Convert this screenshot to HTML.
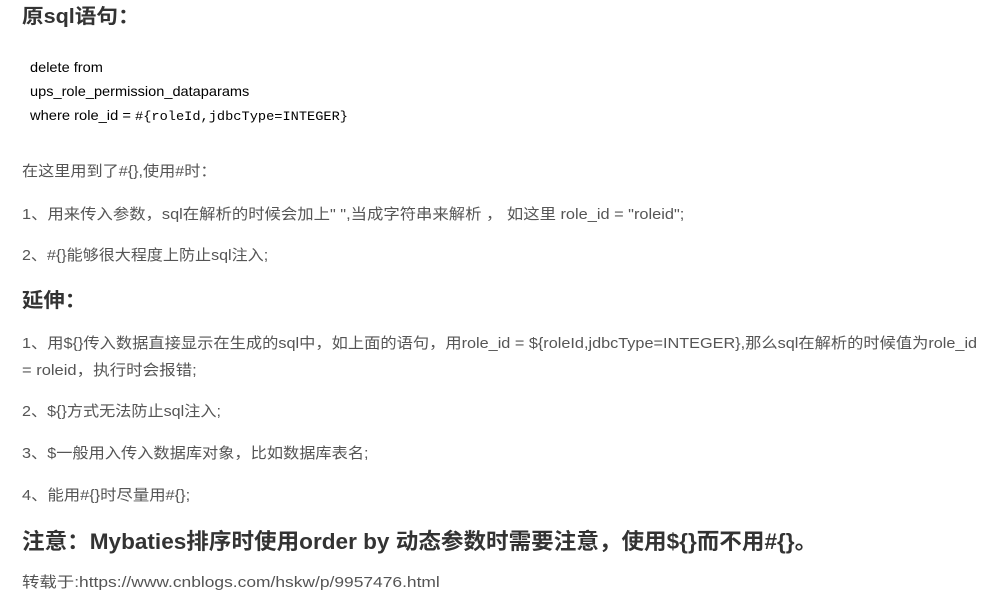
<!DOCTYPE html>
<html><head><meta charset="utf-8"><style>
body{margin:0;width:994px;height:609px;background:#fff;position:relative;overflow:hidden;font-family:"Liberation Sans","Noto Sans CJK SC",sans-serif;color:#555;font-size:15px}
div{position:absolute;left:22px;white-space:nowrap;line-height:20px;transform-origin:0 50%}
.h{font-weight:bold;color:#333;font-size:20px;line-height:26px}
.c{color:#000;font-size:14px;left:30px}
.m{font-family:"Liberation Mono","DejaVu Sans Mono",monospace;font-size:13px}
</style></head><body>
<div class="h" style="top:4px;transform:scaleX(1.08)">原sql语句：</div>
<div class="c" style="top:57px;transform:scaleX(1.04)">delete from</div>
<div class="c" style="top:81px;transform:scaleX(1.04)">ups_role_permission_dataparams</div>
<div class="c" style="top:105px;transform:scaleX(1.05)">where role_id = <span class="m">#{roleId,jdbcType=INTEGER}</span></div>
<div style="top:162px;transform:scaleX(1.075)">在这里用到了#{},使用#时：</div>
<div style="top:205px;transform:scaleX(1.09)">1、用来传入参数，sql在解析的时候会加上" ",当成字符串来解析 ， 如这里 role_id = "roleid";</div>
<div style="top:246px;transform:scaleX(1.07)">2、#{}能够很大程度上防止sql注入;</div>
<div class="h" style="top:288px;transform:scaleX(1.07)">延伸：</div>
<div style="top:334px;transform:scaleX(1.083)">1、用${}传入数据直接显示在生成的sql中，如上面的语句，用role_id = ${roleId,jdbcType=INTEGER},那么sql在解析的时候值为role_id</div>
<div style="top:361px;transform:scaleX(1.1)">= roleid，执行时会报错;</div>
<div style="top:402px;transform:scaleX(1.075)">2、${}方式无法防止sql注入;</div>
<div style="top:444px;transform:scaleX(1.08)">3、$一般用入传入数据库对象，比如数据库表名;</div>
<div style="top:486px;transform:scaleX(1.09)">4、能用#{}时尽量用#{};</div>
<div class="h" style="top:528px;font-size:22px;line-height:28px;transform:scaleX(1.026)">注意：Mybaties排序时使用order by 动态参数时需要注意，使用${}而不用#{}。</div>
<div style="top:573px;transform:scaleX(1.16)">转载于:https://www.cnblogs.com/hskw/p/9957476.html</div>
</body></html>
